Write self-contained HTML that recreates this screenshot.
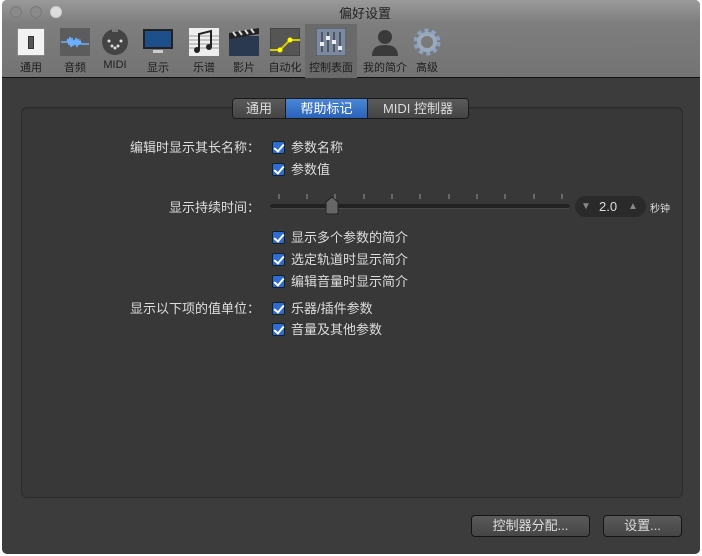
<!DOCTYPE html>
<html><head><meta charset="utf-8"><style>
*{margin:0;padding:0;box-sizing:border-box}
body{width:702px;height:556px;background:#fff;position:relative;overflow:hidden;font-family:"Liberation Sans","Noto Sans CJK SC",sans-serif;}
.win{position:absolute;left:2px;top:0;width:698px;height:554px;background:#3c3c3c;border-radius:5px;overflow:hidden}
.tb{position:absolute;left:0;top:0;width:698px;height:78px;background:linear-gradient(#9a9a9a,#7e7e7e 30%,#737373);border-bottom:1px solid #111}
.dot{position:absolute;top:6px;width:12px;height:12px;border-radius:50%;background:#8a8a8a;border:1px solid #7a7a7a}
.title{position:absolute;top:3px;left:0;width:698px;text-align:center;font-size:13px;color:#222;padding-left:28px}
.it{position:absolute;top:24px;width:52px;height:54px;text-align:center;font-size:11px;color:#1e1e1e}
.it .ic{position:absolute;left:11px;top:4px;width:30px;height:28px}
.it span{position:absolute;left:0;right:0;top:35px}
.panel{position:absolute;left:19px;top:107px;width:662px;height:391px;background:#383838;border:1px solid #2b2b2b;border-radius:6px;box-shadow:inset 0 1px 0 #333}
.tabs{position:absolute;left:230px;top:98px;height:21px;display:flex;border:1px solid #1a1a1a;border-radius:4px;overflow:hidden;font-size:13px;color:#ddd}
.tabs div{background:linear-gradient(#5a5a5a,#454545);line-height:19px;text-align:center;border-right:1px solid #1a1a1a}
.tabs .on{background:linear-gradient(#4a86d6,#2a62b8);color:#fff}
.lbl{position:absolute;right:440px;font-size:13px;color:#ddd;white-space:nowrap}
.cb{position:absolute;left:270px;font-size:13px;color:#ddd;white-space:nowrap}
.cb i{display:inline-block;width:13px;height:13px;background:#2f6bd0;border:1px solid #122;border-radius:2px;vertical-align:-2px;margin-right:6px;position:relative}
.cb i:after{content:"";position:absolute;left:3px;top:0px;width:4px;height:8px;border:solid #fff;border-width:0 2px 2px 0;transform:rotate(40deg)}
.btn{position:absolute;top:515px;height:22px;border:1px solid #151515;border-radius:4px;background:linear-gradient(#5a5a5a,#464646);color:#ddd;font-size:13px;text-align:center;line-height:20px}
</style></head><body>
<div class="win">
<div class="tb">
<div class="dot" style="left:8px"></div><div class="dot" style="left:28px"></div><div class="dot" style="left:48px;background:#ddd;border-color:#ccc"></div>
<div class="title">偏好设置</div>
<div class="it" style="left:3px"><div class="ic" style="background:#f2f2f2;border:1px solid #888;left:12px;width:28px"><div style="position:absolute;left:10px;top:7px;width:6px;height:13px;background:#555;border:1px solid #333"></div></div><span>通用</span></div>
<div class="it" style="left:47px"><svg class="ic" viewBox="0 0 30 28"><rect width="30" height="28" fill="#5c5c5c"/><path d="M1 14h6l1-3 1 6 1-8 1 10 1-9 1 8 1-6 1 5 1-7 1 9 1-8 1 6 1-4 1 3h8" stroke="#6ab0ff" stroke-width="1.5" fill="none"/></svg><span>音频</span></div>
<div class="it" style="left:87px"><svg class="ic" viewBox="0 0 30 28"><circle cx="15" cy="14" r="13" fill="#444"/><rect x="12" y="0" width="6" height="4" fill="#7a7a7a"/><circle cx="9" cy="13" r="1.5" fill="#ddd"/><circle cx="21" cy="13" r="1.5" fill="#ddd"/><circle cx="12" cy="18" r="1.5" fill="#ddd"/><circle cx="18" cy="18" r="1.5" fill="#ddd"/><circle cx="15" cy="20" r="1.5" fill="#ddd"/></svg><span>MIDI</span></div>
<div class="it" style="left:130px"><svg class="ic" viewBox="0 0 30 28"><rect x="0" y="1" width="30" height="20" fill="#222"/><rect x="2" y="3" width="26" height="16" fill="#1d4f8a"/><rect x="10" y="22" width="10" height="3" fill="#ccc"/></svg><span>显示</span></div>
<div class="it" style="left:176px"><svg class="ic" viewBox="0 0 30 28"><rect width="30" height="28" fill="#eee"/><path d="M0 8h30M0 12h30M0 16h30M0 20h30" stroke="#999"/><path d="M10 22V6l12-3v16" stroke="#222" stroke-width="2" fill="none"/><circle cx="8" cy="22" r="3" fill="#222"/><circle cx="20" cy="19" r="3" fill="#222"/></svg><span>乐谱</span></div>
<div class="it" style="left:216px"><svg class="ic" viewBox="0 0 30 28"><rect y="8" width="30" height="20" fill="#2a3850"/><path d="M0 5l30-5v6L0 11z" fill="#222"/><path d="M4 4l3 4M10 3l3 4M16 2l3 4M22 1l3 4" stroke="#ddd" stroke-width="2"/></svg><span>影片</span></div>
<div class="it" style="left:257px"><svg class="ic" viewBox="0 0 30 28"><rect width="30" height="28" fill="#555" stroke="#333"/><path d="M0 22h10l10-10h10" stroke="#d8c800" stroke-width="2" fill="none"/><circle cx="10" cy="22" r="2.5" fill="#ff0"/><circle cx="20" cy="12" r="2.5" fill="#ff0"/></svg><span>自动化</span></div>
<div style="position:absolute;left:303px;top:24px;width:52px;height:54px;background:#6a6a6a"></div>
<div class="it" style="left:303px"><svg class="ic" viewBox="0 0 30 28"><rect width="30" height="28" fill="#7c8aa0" stroke="#445"/><path d="M6 4v20M12 4v20M18 4v20M24 4v20" stroke="#222"/><rect x="4" y="14" width="4" height="4" fill="#eee"/><rect x="10" y="8" width="4" height="4" fill="#eee"/><rect x="16" y="12" width="4" height="4" fill="#eee"/><rect x="22" y="18" width="4" height="4" fill="#eee"/></svg><span>控制表面</span></div>
<div class="it" style="left:357px"><svg class="ic" viewBox="0 0 30 28"><circle cx="15" cy="9" r="7" fill="#3a3a3a"/><path d="M2 28c0-9 6-11 13-11s13 2 13 11z" fill="#3a3a3a"/></svg><span>我的简介</span></div>
<div class="it" style="left:399px"><svg class="ic" viewBox="0 0 30 28"><circle cx="15" cy="14" r="11" fill="none" stroke="#8aa0c0" stroke-width="5" stroke-dasharray="4 3"/><circle cx="15" cy="14" r="8" fill="none" stroke="#9ab" stroke-width="4"/></svg><span>高级</span></div>
</div>
<div class="panel"></div>
<div class="tabs"><div style="width:53px">通用</div><div class="on" style="width:82px">帮助标记</div><div style="width:100px;border:0">MIDI 控制器</div></div>
<div class="lbl" style="top:137px">编辑时显示其长名称：</div>
<div class="cb" style="top:137px"><i></i>参数名称</div>
<div class="cb" style="top:159px"><i></i>参数值</div>
<div class="lbl" style="top:197px">显示持续时间：</div>
<div style="position:absolute;left:268px;top:204px;width:300px;height:5px;background:#222;border-radius:3px;border-bottom:1px solid #4a4a4a"></div>
<svg style="position:absolute;left:268px;top:190px" width="300" height="30"><g stroke="#999"><path d="M9 4v5M37 4v5M65 4v5M94 4v5M122 4v5M150 4v5M179 4v5M207 4v5M235 4v5M264 4v5M292 4v5"/></g><path d="M56 12l6-5 6 5v12h-12z" fill="#666" stroke="#222"/></svg>
<div style="position:absolute;left:573px;top:196px;width:71px;height:21px;background:#2a2a2a;border-radius:11px;color:#ddd;font-size:13px;line-height:21px"><span style="position:absolute;left:6px;font-size:10px;color:#888">▼</span><span style="position:absolute;left:24px">2.0</span><span style="position:absolute;left:53px;font-size:10px;color:#888">▲</span></div>
<div style="position:absolute;left:648px;top:200px;font-size:10px;color:#ddd">秒钟</div>
<div class="cb" style="top:227px"><i></i>显示多个参数的简介</div>
<div class="cb" style="top:249px"><i></i>选定轨道时显示简介</div>
<div class="cb" style="top:271px"><i></i>编辑音量时显示简介</div>
<div class="lbl" style="top:298px">显示以下项的值单位：</div>
<div class="cb" style="top:298px"><i></i>乐器/插件参数</div>
<div class="cb" style="top:319px"><i></i>音量及其他参数</div>
<div class="btn" style="left:469px;width:119px">控制器分配...</div>
<div class="btn" style="left:601px;width:79px">设置...</div>
</div>
</body></html>
